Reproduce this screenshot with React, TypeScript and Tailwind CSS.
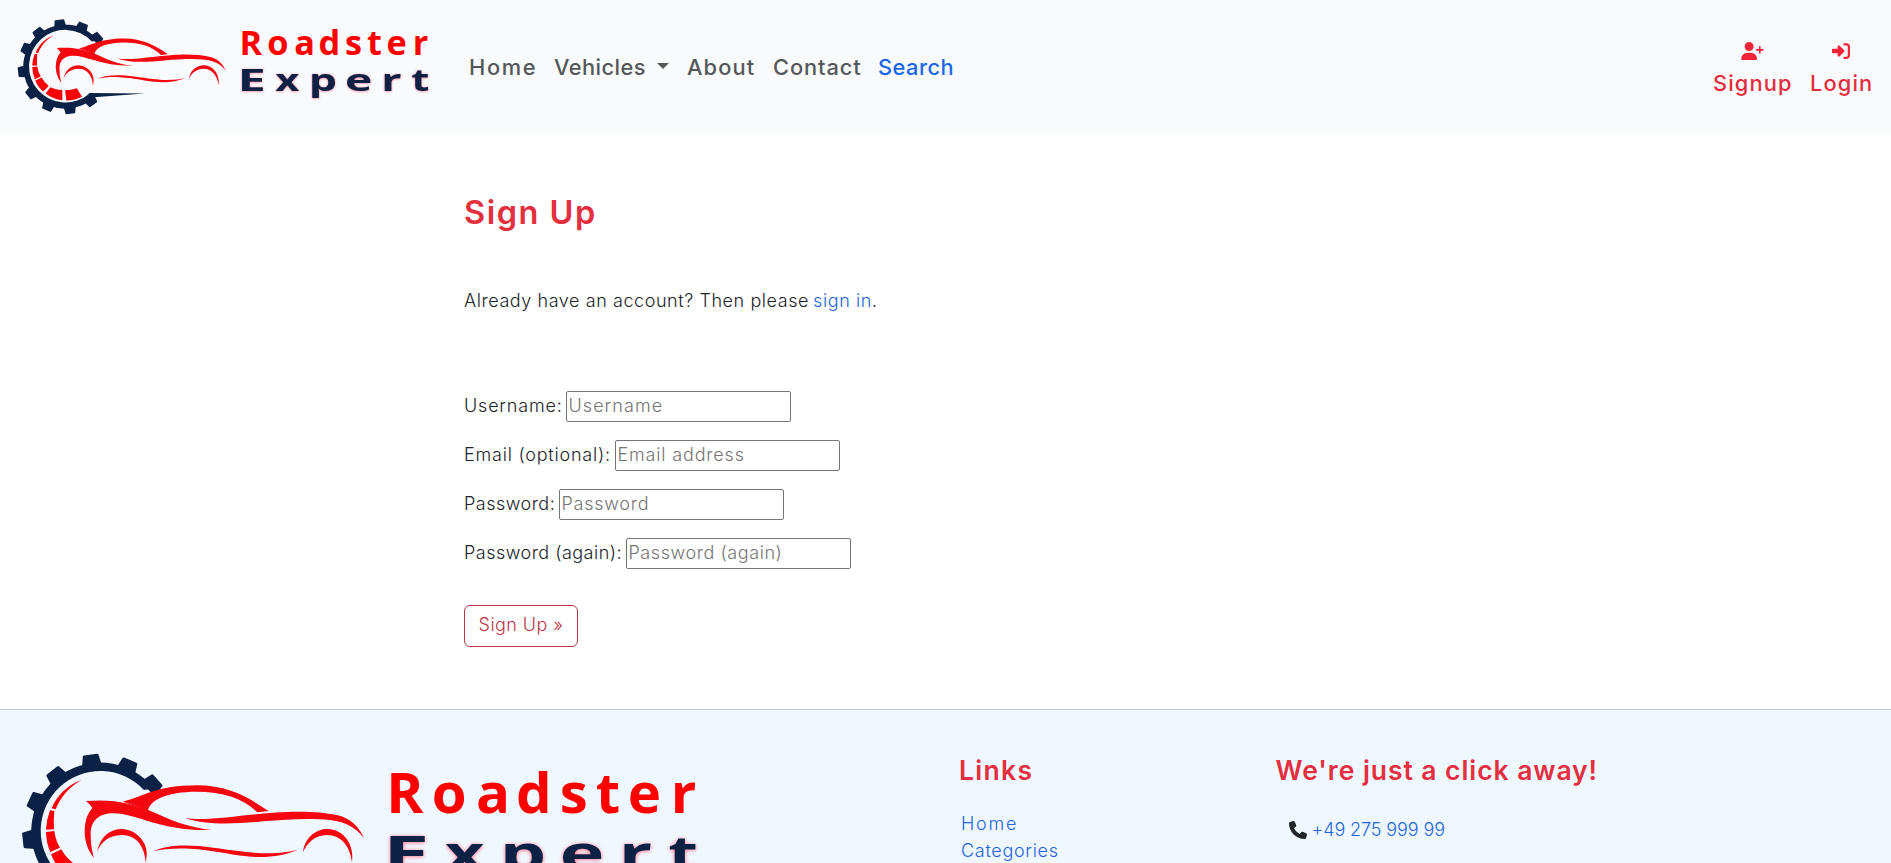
import { FaPhone, FaRightToBracket, FaUserPlus } from "react-icons/fa6";

const TEETH = [-128, -155, 173.5, 142, 113.5, 83.5, 53, -97, -67, -42];
const ROADSTER_X = [1159, 1295, 1428, 1548, 1679, 1787, 1883, 2012];

const EXPERT: { letter: string; x: number; stretch: number }[] = [
  { letter: "E", x: 1171, stretch: 1.7 },
  { letter: "x", x: 1336, stretch: 1.4 },
  { letter: "p", x: 1516, stretch: 1.5 },
  { letter: "e", x: 1689, stretch: 1.55 },
  { letter: "r", x: 1873, stretch: 1.5 },
  { letter: "t", x: 2009, stretch: 1.4 },
];
const BEARING: Record<string, number> = { E: 13, x: 1, p: 11, e: 7, r: 11, t: 3 };

function Logo({ className }: { className: string }) {
  return (
    <svg viewBox="0 66 2160 660" className={className} role="img" aria-label="Roadster Expert">
      <path
        d="M462 265 A207 207 0 1 0 449 539 L420 526 A179 179 0 1 1 432 270Z"
        fill="#0b2145"
      />
      <g fill="#0b2145" stroke="#0b2145" strokeWidth="8" strokeLinejoin="round">
        {TEETH.map((angle) => (
          <path
            key={angle}
            d="M196 -26 L229 -20 L229 20 L196 26Z"
            transform={`translate(300 395) rotate(${angle})`}
          />
        ))}
      </g>
      <path d="M414 524 L693 527 L440 545Z" fill="#0b2145" />

      <g fill="#fb0007">
        <path d="M244 240 C205 255 172 283 155 325 L167 328 C180 295 205 262 244 240Z" />
        <path d="M150 331 L163 333 Q160 360 162 388 L138 389 Q139 360 150 331Z" />
        <path d="M138 396 L163 393 Q166 420 180 443 L151 456 Q139 430 138 396Z" />
        <path d="M153 463 L184 448 Q197 472 219 489 L192 517 Q165 495 153 463Z" />
        <path d="M204 527 L227 496 Q255 510 286 509 L286 560 Q240 556 204 527Z" />
        <path d="M300 511 Q330 511 358 501 L383 542 Q350 560 306 561Z" />
      </g>

      <g fill="#f5070f">
        <path d="M368 305 C430 290 470 256 590 256 C690 256 750 296 806 333 L772 337 C730 295 670 275 590 275 C500 275 450 300 444 332 Q410 317 368 305Z" />
        <path d="M258 303 C340 297 400 308 480 345 C530 368 570 382 635 390 C560 392 500 380 440 362 C400 350 370 340 340 340 C290 340 272 370 272 400 C272 430 275 450 282 474 C262 450 254 420 254 395 C254 365 262 340 277 324 C272 316 266 310 258 303Z" />
        <path d="M557 354 C620 364 720 345 820 338 C900 332 960 335 1010 345 C1050 353 1078 380 1092 415 C1070 385 1040 366 990 360 C930 354 860 358 790 364 C700 373 610 375 557 354Z" />
        <path d="M291 457 C300 410 330 387 365 387 C410 387 445 430 440 468 L437 488 C434 440 410 405 365 405 C325 405 300 430 291 457Z" />
        <path d="M909 457 C915 410 950 387 982 387 C1030 387 1064 432 1056 487 C1050 440 1025 405 980 405 C945 405 920 430 909 457Z" />
        <path d="M459 454 C500 435 560 432 640 443 C710 452 760 460 800 460 C840 460 870 455 893 450 C850 468 800 475 740 469 C680 462 640 450 570 446 C530 444 490 446 459 454Z" />
      </g>

      <text
        x={ROADSTER_X.join(" ")}
        y="338"
        className="fill-[#fe0000] font-['Open_Sans'] text-[169px] font-bold"
      >
        Roadster
      </text>
      <g className="fill-[#0d2145] font-['Open_Sans'] text-[147px] font-bold [filter:drop-shadow(0_2px_6px_#ff6f88)]">
        {EXPERT.map(({ letter, x, stretch }) => (
          <text
            key={letter}
            transform={`translate(${x - BEARING[letter] * stretch} 512) scale(${stretch} 1)`}
          >
            {letter}
          </text>
        ))}
      </g>
    </svg>
  );
}

const FIELDS = [
  { label: "Username:", labelStyle: "w-[102px] tracking-[0.8px]", placeholder: "Username", inputStyle: "tracking-[1.05px]", type: "text" },
  { label: "Email (optional):", labelStyle: "w-[151px] tracking-[0.78px]", placeholder: "Email address", inputStyle: "tracking-[0.83px]", type: "email" },
  { label: "Password:", labelStyle: "w-[95px] tracking-[0.48px]", placeholder: "Password", inputStyle: "tracking-[0.75px]", type: "password" },
  { label: "Password (again):", labelStyle: "w-[162px] tracking-[0.48px]", placeholder: "Password (again)", inputStyle: "tracking-[0.57px]", type: "password" },
];

export default function App() {
  return (
    <div className="h-screen overflow-hidden bg-white font-['Inter',sans-serif] text-[18px] leading-[27px] font-light text-[#212529]">
      <header className="flex h-[134.5px] items-center bg-[#f8fafc] text-[21.8px] leading-[32px] font-[450] whitespace-nowrap text-[#555759]">
        <a href="#" className="ml-[4px] block w-[465px] shrink-0">
          <Logo className="block h-[134px] w-[439px]" />
        </a>
        <nav className="flex grow">
          <a href="#" className="w-[85px] tracking-[1.7px]">Home</a>
          <a href="#" className="flex w-[133px] items-center">
            <span className="w-[103px] tracking-[0.45px]">Vehicles</span>
            <span className="-mt-0.5 border-x-[6px] border-t-[6px] border-x-transparent border-t-[#555759]" />
          </a>
          <a href="#" className="w-[86px] tracking-[1.15px]">About</a>
          <a href="#" className="w-[105px] tracking-[0.9px]">Contact</a>
          <a href="#" className="tracking-[0.5px] text-[#1b66e6]">Search</a>
        </nav>
        <div className="mr-[19px] flex gap-[18px] text-[#e22d3c]">
          <a href="#" className="flex w-[79px] flex-col">
            <span className="flex h-8 items-center justify-center">
              <FaUserPlus className="h-[18px] w-[23px] text-[#ef2436]" />
            </span>
            <span className="tracking-[1.15px]">Signup</span>
          </a>
          <a href="#" className="flex w-[62px] flex-col">
            <span className="flex h-8 items-center justify-center">
              <FaRightToBracket className="h-[18px] w-[18px] text-[#ef2436]" />
            </span>
            <span className="tracking-[1.15px]">Login</span>
          </a>
        </div>
      </header>

      <main className="h-[574.5px] pt-[59.5px] pl-[464px]">
        <h1 className="text-[32.5px] leading-[38px] font-semibold tracking-[1.5px] text-[#e42f3e]">Sign Up</h1>
        <p className="mt-[55px] flex tracking-[0.57px]">
          <span className="w-[349px]">Already have an account? Then please</span>
          <a href="#" className="tracking-[0.6px] text-[#2463dc]">sign in</a>
          <span>.</span>
        </p>
        <form className="mt-[77px]">
          <div className="flex flex-col gap-[18px]">
            {FIELDS.map((field) => (
              <label key={field.label} className="flex h-[31px] items-center">
                <span className={`pb-[2px] whitespace-nowrap ${field.labelStyle}`}>{field.label}</span>
                <input
                  type={field.type}
                  placeholder={field.placeholder}
                  className={`h-[31px] w-[225px] rounded-[2px] border border-[#767676] bg-white px-[1.5px] pb-[2px] placeholder:text-[#757575] ${field.inputStyle}`}
                />
              </label>
            ))}
          </div>
          <button
            type="button"
            className="mt-[36px] flex h-[42px] w-[114px] items-center justify-center rounded-[6px] border border-[#bb3646] pb-[3px] tracking-[0.44px] text-[#bb3646]"
          >
            Sign Up »
          </button>
        </form>
      </main>

      <footer className="flex border-t border-[#c5c8cc] bg-[#f0f8ff] pt-[12px]">
        <div className="w-[960px] shrink-0">
          <Logo className="block h-[220px] w-[720px]" />
        </div>
        <div className="w-[315.5px] shrink-0 pt-[31.5px]">
          <h2 className="-ml-px text-[26.5px] leading-[32px] font-semibold tracking-[1.3px] text-[#e42f3e]">Links</h2>
          <ul className="mt-[24.5px] pl-px text-[#2463dc]">
            <li><a href="#" className="tracking-[1.75px]">Home</a></li>
            <li><a href="#" className="tracking-[0.7px]">Categories</a></li>
          </ul>
        </div>
        <div className="pt-[31.5px]">
          <h2 className="text-[26.5px] leading-[32px] font-semibold tracking-[0.93px] whitespace-nowrap text-[#e42f3e]">
            We're just a click away!
          </h2>
          <p className="mt-[30.5px] flex items-center pl-[13px]">
            <FaPhone className="mr-[5px] h-[18px] w-[18px]" />
            <a href="#" className="tracking-[-0.1px] text-[#2463dc]">+49 275 999 99</a>
          </p>
        </div>
      </footer>
    </div>
  );
}
